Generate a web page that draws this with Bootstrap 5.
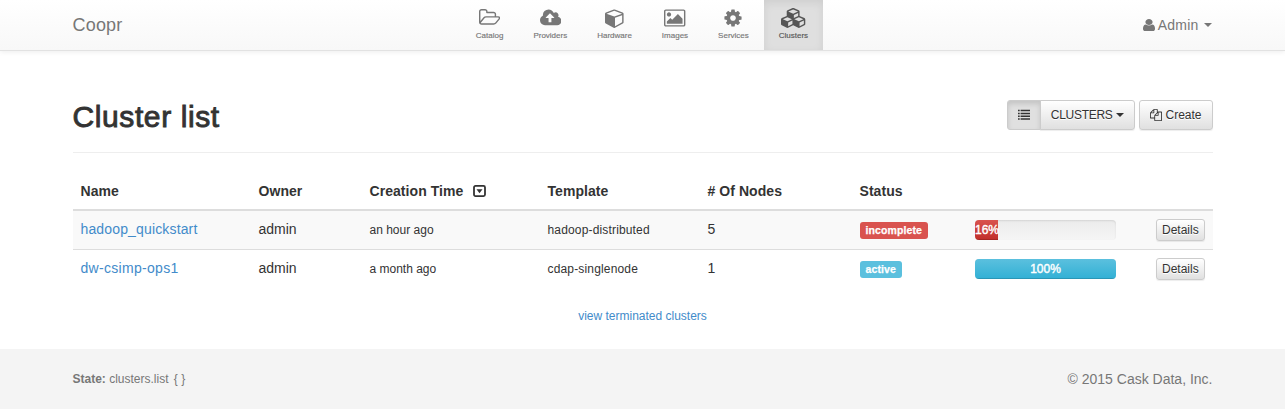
<!DOCTYPE html>
<html lang="en">
<head>
<meta charset="utf-8">
<title>Coopr</title>
<link rel="stylesheet" href="https://cdn.jsdelivr.net/npm/bootstrap@5.3.0/dist/css/bootstrap.min.css">
<style>
body{font-family:"Liberation Sans",Arial,sans-serif;font-size:14px;line-height:20px;color:#333;background:#fff;overflow:hidden}
.container{max-width:1170px;padding-left:15px;padding-right:15px}
a{color:#428bca;text-decoration:none}
svg{fill:currentColor;display:block;flex:none}
.topbar{height:51px;padding:0;background:linear-gradient(#fff,#f8f8f8);border-bottom:1px solid #e2e2e2;box-shadow:0 1px 5px rgba(0,0,0,.075);color:#777}
.topbar .container{display:grid;grid-template-columns:388.3px 1fr auto;height:50px;align-items:center}
.topbar .navbar-brand{font-size:18px;line-height:20px;color:#777;padding:0;margin:0;letter-spacing:.2px}
.topbar .nav-link{height:50px;padding:8px 15px 0;color:#777;font-size:8px;line-height:10px;display:flex;flex-direction:column;align-items:center;gap:3px;-webkit-text-stroke:.15px currentColor}
.topbar .nav-link.active{color:#555;background:#dfdfdf;box-shadow:inset 0 3px 9px rgba(0,0,0,.075)}
.account{letter-spacing:.2px;gap:3px;color:#777;padding-right:1px}
.account .tri{margin-left:2px}
.tri{width:0;height:0;border:4px solid transparent;border-top-color:currentColor;border-bottom:0}
h1{font-size:30px;line-height:34px;font-weight:400;letter-spacing:.6px;-webkit-text-stroke:.9px #333;margin:0}
.headline{height:102px;padding-top:49px;border-bottom:1px solid #eee;margin-bottom:20px}
.btn-soft{--bs-btn-color:#333;border:1px solid #ccc;background:linear-gradient(#fff,#e0e0e0);text-shadow:0 1px 0 #fff;box-shadow:inset 0 1px 0 rgba(255,255,255,.15),0 1px 1px rgba(0,0,0,.075);color:#333;font-size:12px;line-height:18px;padding:5px 10px;border-radius:3px;height:30px;display:flex;align-items:center;gap:3px}
.btn-soft.active{background:#e0e0e0;border-color:#ccc;color:#333;box-shadow:inset 0 3px 5px rgba(0,0,0,.125)}
.btn-scope{gap:4px}
.btn-scope span:first-child{letter-spacing:-.3px}
.btn-detail{padding:0 5px;height:22px;display:flex}
.cluster-table{table-layout:fixed;margin:0;color:#333;border-collapse:separate;border-spacing:0}
.cluster-table>thead>tr>th{height:38px;padding:0 8px;border-bottom:2px solid #ddd;font-weight:700;color:#333;vertical-align:middle;white-space:nowrap;letter-spacing:.06px}
.cluster-table>tbody>tr>td{height:39px;padding:8px 8px 0;line-height:22px;vertical-align:top;border:0;color:#333;box-shadow:none;white-space:nowrap}
.cluster-table>tbody>tr>td:is(:nth-child(1),:nth-child(2),:nth-child(5)){line-height:20px}
.cluster-table>tbody>tr>td:first-child{letter-spacing:.15px}
.cluster-table>tbody>tr:last-child>td:first-child{letter-spacing:.3px}
.cluster-table>tbody>tr:first-child>td{background:#f9f9f9;border-bottom:1px solid #ddd}
.sort-icon{margin-left:2px}
.fine{font-size:12px}
.wider{letter-spacing:.16px}
.tag{display:block;width:max-content;border-radius:3px;color:#fff;font-weight:700;font-size:10.5px;line-height:17px;height:17px;padding:0 6px;margin-top:3px;letter-spacing:.1px;-webkit-text-stroke:.25px #fff}
.meter{height:20px;width:141px;margin-top:1px;border-radius:4px;background:linear-gradient(#ebebeb,#f5f5f5);box-shadow:inset 0 1px 2px rgba(0,0,0,.1)}
.meter .progress-bar{font-size:12px;line-height:20px;overflow:visible;box-shadow:inset 0 -1px 0 rgba(0,0,0,.15);-webkit-text-stroke:.4px #fff}
.bar-red{background:linear-gradient(#d9534f,#c12e2a)}
.bar-blue{background:linear-gradient(#5bc0de,#31b0d5)}
.view-more{height:60px;padding-top:17px}
.page-foot{background:#f4f4f4;height:60px;color:#777}
.braces{margin-left:2px}
</style>
</head>
<body>
<nav class="topbar">
<div class="container">
<div><a class="navbar-brand" href="#">Coopr</a></div>
<div class="d-flex">
<a class="nav-link" href="#"><svg width="21.400" height="20" viewBox="0 0 1920 1792"><path d="M1781 803q0-35-53-35h-1088q-40 0-85.500 21.500t-71.500 52.500l-294 363q-18 24-18 40 0 35 53 35h1088q40 0 86-22t71-53l294-363q18-22 18-39zm-1141-163h768v-160q0-40-28-68t-68-28h-576q-40 0-68-28t-28-68v-64q0-40-28-68t-68-28h-320q-40 0-68 28t-28 68v853l256-315q44-53 116-87.500t140-34.500zm1269 163q0 62-46 120l-295 363q-43 53-116 87.500t-140 34.500h-1088q-92 0-158-66t-66-158v-960q0-92 66-158t158-66h320q92 0 158 66t66 158v32h544q92 0 158 66t66 158v160h192q54 0 99 24.500t67 70.500q15 32 15 68z" transform="translate(0 90)"/></svg><span>Catalog</span></a>
<a class="nav-link" href="#"><svg width="21.400" height="20" viewBox="-64 0 1920 1792"><path d="M1216 864q0-14-9-23l-352-352q-9-9-23-9t-23 9l-351 351q-10 12-10 24 0 14 9 23t23 9h224v352q0 13 9.500 22.500t22.500 9.500h192q13 0 22.500-9.500t9.500-22.500v-352h224q13 0 22.500-9.500t9.500-22.500zm640 288q0 159-112.500 271.500t-271.500 112.500h-1088q-185 0-316.500-131.500t-131.500-316.500q0-130 70-240t188-165q-2-30-2-43 0-212 150-362t362-150q156 0 285.500 87t188.500 231q71-62 166-62 106 0 181 75t75 181q0 76-41 138 130 31 213.500 135.500t83.500 238.500z"/></svg><span>Providers</span></a>
<a class="nav-link" href="#"><svg width="18.600" height="20" viewBox="0 0 1664 1792"><path d="M896 1629l640-349v-636l-640 233v752zm-64-865l698-254-698-254-698 254zm832-252v768q0 35-18 65t-49 47l-704 384q-28 16-61 16t-61-16l-704-384q-31-17-49-47t-18-65v-768q0-40 23-73t61-47l704-256q22-8 44-8t44 8l704 256q38 14 61 47t23 73z"/></svg><span>Hardware</span></a>
<a class="nav-link" href="#"><svg width="21.400" height="20" viewBox="-64 0 1920 1792"><path d="M576 576q0 80-56 136t-136 56-136-56-56-136 56-136 136-56 136 56 56 136zm1024 384v448h-1408v-192l320-320 160 160 512-512zm96-704h-1600q-13 0-22.500 9.500t-9.500 22.500v1216q0 13 9.500 22.500t22.500 9.500h1600q13 0 22.500-9.500t9.500-22.500v-1216q0-13-9.500-22.500t-22.500-9.500zm160 32v1216q0 66-47 113t-113 47h-1600q-66 0-113-47t-47-113v-1216q0-66 47-113t113-47h1600q66 0 113 47t47 113z"/></svg><span>Images</span></a>
<a class="nav-link" href="#"><svg width="20" height="20" viewBox="0 0 1792 1792"><path d="M1152 896q0-106-75-181t-181-75-181 75-75 181 75 181 181 75 181-75 75-181zm512-109v222q0 12-8 23t-20 13l-185 28q-19 54-39 91 35 50 107 138 10 12 10 25t-9 23q-27 37-99 108t-94 71q-12 0-26-9l-138-108q-44 23-91 38-16 136-29 186-7 28-36 28h-222q-14 0-24.500-8.500t-11.500-21.500l-28-184q-49-16-90-37l-141 107q-10 9-25 9-14 0-25-11-126-114-165-168-7-10-7-23 0-12 8-23 15-21 51-66.500t54-70.500q-27-50-41-99l-183-27q-13-2-21-12.500t-8-23.500v-222q0-12 8-23t19-13l186-28q14-46 39-92-40-57-107-138-10-12-10-24 0-10 9-23 26-36 98.500-107.500t94.500-71.500q13 0 26 10l138 107q44-23 91-38 16-136 29-186 7-28 36-28h222q14 0 24.500 8.500t11.500 21.500l28 184q49 16 90 37l142-107q9-9 24-9 13 0 25 10 129 119 165 170 7 8 7 22 0 12-8 23-15 21-51 66.500t-54 70.500q26 50 41 98l183 28q13 2 21 12.500t8 23.500z"/></svg><span>Services</span></a>
<a class="nav-link active" href="#"><svg width="24.300" height="20" viewBox="-128 0 2176 1792"><path d="M512 1632l384-192v-314l-384 164v342zm-64-454l404-173-404-173-404 173zm1088 454l384-192v-314l-384 164v342zm-64-454l404-173-404-173-404 173zm-448-293l384-165v-266l-384 164v267zm-64-379l441-189-441-189-441 189zm1088 518v416q0 36-19 67t-52 47l-448 224q-25 14-57 14t-57-14l-448-224q-5-2-7-4-2 2-7 4l-448 224q-25 14-57 14t-57-14l-448-224q-33-16-52-47t-19-67v-416q0-38 21.500-70t56.500-48l434-186v-400q0-38 21.500-70t56.500-48l448-192q23-10 50-10t50 10l448 192q35 16 56.500 48t21.500 70v400l434 186q36 16 57 48t21 70z"/></svg><span>Clusters</span></a>
</div>
<a class="account d-flex align-items-center" href="#"><svg width="12" height="14" viewBox="256 0 1280 1792" preserveAspectRatio="none"><path d="M1536 1399q0 109-62.500 187t-150.500 78h-854q-88 0-150.500-78t-62.500-187q0-85 8.500-160.500t31.500-152 58.500-131 94-89 134.500-34.500q131 128 313 128t313-128q76 0 134.500 34.500t94 89 58.500 131 31.500 152 8.500 160.500zm-256-887q0 159-112.500 271.500t-271.500 112.500-271.500-112.500-112.500-271.500 112.500-271.500 271.500-112.500 271.500 112.500 112.500 271.500z"/></svg><span>Admin</span><span class="tri"></span></a>
</div>
</nav>
<main class="container">
<div class="headline d-flex justify-content-between">
<h1>Cluster list</h1>
<div class="d-flex gap-1">
<div class="btn-group">
<button class="btn btn-soft active"><svg width="12" height="12" viewBox="0 0 14 14"><path d="M0 1h2v1.700H0zM3 1h11v1.700H3zM0 4.300h2V6H0zM3 4.300h11V6H3zM0 7.600h2v1.700H0zM3 7.600h11v1.700H3zM0 10.900h2v1.700H0zM3 10.900h11v1.700H3z"/></svg></button>
<button class="btn btn-soft btn-scope"><span>CLUSTERS</span><span class="tri"></span></button>
</div>
<button class="btn btn-soft"><svg width="12" height="12" viewBox="0 0 1792 1792"><path d="M1696 384q40 0 68 28t28 68v1216q0 40-28 68t-68 28h-960q-40 0-68-28t-28-68v-288h-544q-40 0-68-28t-28-68v-672q0-40 20-88t48-76l408-408q28-28 76-48t88-20h416q40 0 68 28t28 68v328q68-40 128-40h416zm-544 213l-299 299h299v-299zm-640-384l-299 299h299v-299zm196 647l316-316v-416h-384v416q0 40-28 68t-68 28h-416v640h512v-256q0-40 20-88t48-76zm956 804v-1152h-384v416q0 40-28 68t-68 28h-416v640h896z"/></svg><span>Create</span></button>
</div>
</div>
<table class="table cluster-table">
<colgroup><col style="width:178px"><col style="width:111px"><col style="width:178px"><col style="width:160px"><col style="width:152px"><col style="width:115.5px"><col style="width:181px"><col style="width:64.5px"></colgroup>
<thead><tr><th>Name</th><th>Owner</th><th><span class="d-flex align-items-center gap-2"><span>Creation Time</span><svg class="sort-icon" width="13" height="12" viewBox="0 0 13 12"><rect x="1" y=".9" width="11" height="10.200" rx="1.500" fill="none" stroke="currentColor" stroke-width="1.800"/><path d="M3.500 4.300h6L6.500 8.300z"/></svg></span></th><th>Template</th><th># Of Nodes</th><th>Status</th><th></th><th></th></tr></thead>
<tbody>
<tr><td><a href="#">hadoop_quickstart</a></td><td>admin</td><td class="fine">an hour ago</td><td class="fine wider">hadoop-distributed</td><td>5</td><td><span class="tag" style="background:#d9534f">incomplete</span></td><td><div class="progress meter"><div class="progress-bar bar-red" style="width:16%">16%</div></div></td><td><button class="btn btn-soft btn-detail">Details</button></td></tr>
<tr><td><a href="#">dw-csimp-ops1</a></td><td>admin</td><td class="fine">a month ago</td><td class="fine wider">cdap-singlenode</td><td>1</td><td><span class="tag" style="background:#5bc0de">active</span></td><td><div class="progress meter"><div class="progress-bar bar-blue" style="width:100%">100%</div></div></td><td><button class="btn btn-soft btn-detail">Details</button></td></tr>
</tbody>
</table>
<div class="text-center fine view-more"><a href="#">view terminated clusters</a></div>
</main>
<footer class="page-foot">
<div class="container d-flex justify-content-between align-items-center h-100">
<div class="fine"><strong>State:</strong> clusters.list <span class="braces">{ }</span></div>
<div>© 2015 Cask Data, Inc.</div>
</div>
</footer>
<script src="https://cdn.jsdelivr.net/npm/bootstrap@5.3.0/dist/js/bootstrap.bundle.min.js"></script>
</body>
</html>
